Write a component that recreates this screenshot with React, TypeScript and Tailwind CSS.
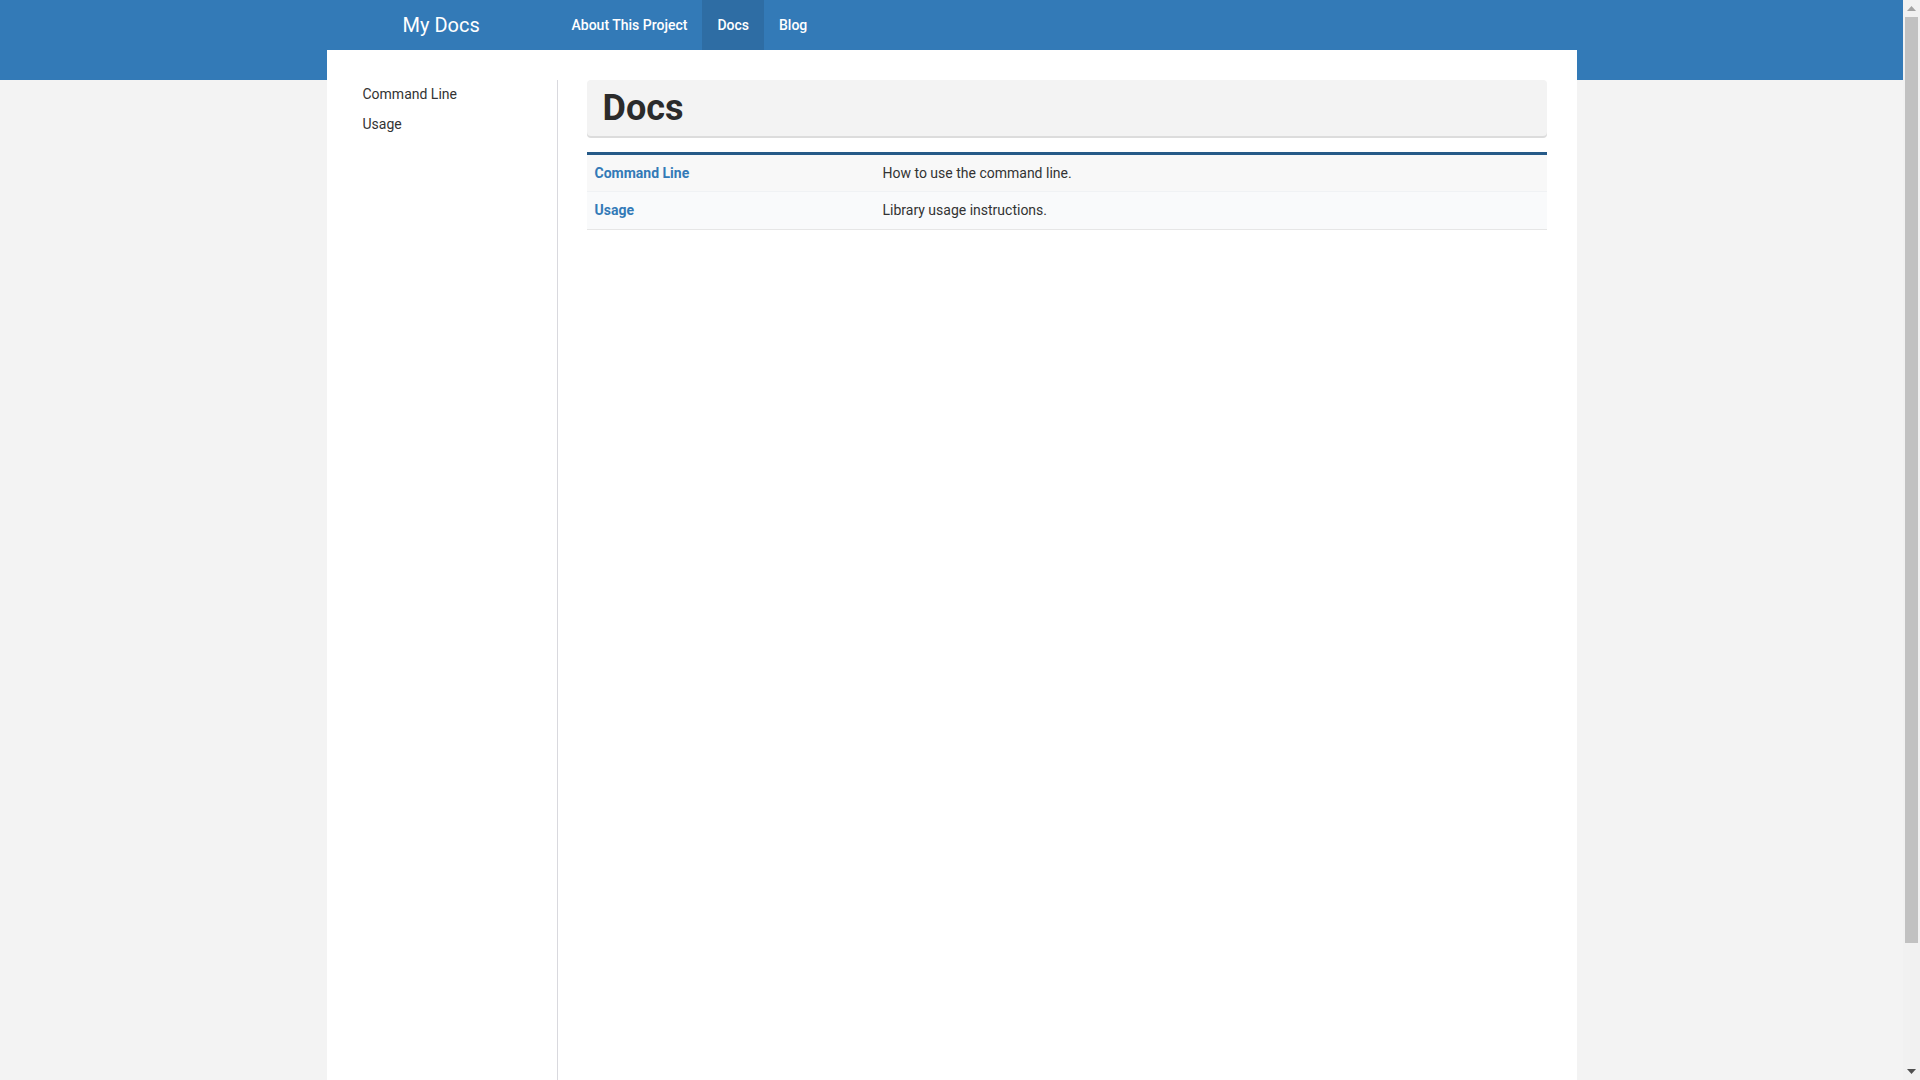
import React from "react";

function Scrollbar() {
  return (
    <div className="flex h-screen w-[17px] shrink-0 flex-col bg-[#f1f1f1]">
      <div className="flex h-[17px] items-center justify-center">
        <svg width="9" height="5" viewBox="0 0 9 5">
          <polygon points="4.5,0 9,5 0,5" fill="#a3a3a3" />
        </svg>
      </div>
      <div className="flex flex-1 flex-col px-[2px]">
        <div className="h-[926px] bg-[#c1c1c1]" />
      </div>
      <div className="flex h-[17px] items-center justify-center">
        <svg width="9" height="5" viewBox="0 0 9 5">
          <polygon points="0,0 9,0 4.5,5" fill="#505050" />
        </svg>
      </div>
    </div>
  );
}

export default function App() {
  return (
    <div
      className="flex h-screen overflow-hidden bg-[#f3f3f3] text-[14px] text-[#333]"
      style={{ fontFamily: "Roboto, 'Liberation Sans', sans-serif" }}
    >
      <div className="flex-1 overflow-hidden">
        <div className="h-[80px] bg-[#337ab7] -mb-[30px]">
          <div className="mx-auto flex h-[50px] w-[1250px] items-stretch">
            <div className="flex w-[230px] items-center pl-[76px] text-[20px] text-white">
              My Docs
            </div>
            <nav className="flex items-stretch text-[14px] font-medium text-white">
              <a className="flex items-center px-[15px]">About This Project</a>
              <a className="flex items-center bg-[#2e6da4] px-[15px]">Docs</a>
              <a className="flex items-center px-[15px]">Blog</a>
            </nav>
          </div>
        </div>
        <div className="relative mx-auto flex min-h-[1170px] w-[1250px] bg-white">
          <aside className="mt-[30px] w-[231px] border-r border-[#d9d9de]">
            <ul className="-mt-[1px] pl-[36px]">
              <li className="h-[30px] leading-[30px]">Command Line</li>
              <li className="h-[30px] leading-[30px]">Usage</li>
            </ul>
          </aside>
          <main className="mt-[30px] flex-1 pl-[29px] pr-[30px]">
            <div className="flex h-[56px] items-center rounded-[4px] bg-[#f3f3f3] px-[16px] shadow-[0_2px_0_#dcdcdc]">
              <h1 className="text-[36px] font-bold leading-none text-[#2b2b2b]">Docs</h1>
            </div>
            <table className="mt-[16px] w-full border-t-[3px] border-[#265a88] shadow-[0_1px_0_#e6e6e6]">
              <tbody>
                <tr className="h-[38px] border-b border-[#f0f2f4] bg-[#f8f8f8]">
                  <td className="w-[30%] px-[8px] font-bold text-[#337ab7]">Command Line</td>
                  <td className="px-[8px]">How to use the command line.</td>
                </tr>
                <tr className="h-[37px] bg-[#f9fafb]">
                  <td className="w-[30%] px-[8px] font-bold text-[#337ab7]">Usage</td>
                  <td className="px-[8px]">Library usage instructions.</td>
                </tr>
              </tbody>
            </table>
          </main>
        </div>
      </div>
      <Scrollbar />
    </div>
  );
}
